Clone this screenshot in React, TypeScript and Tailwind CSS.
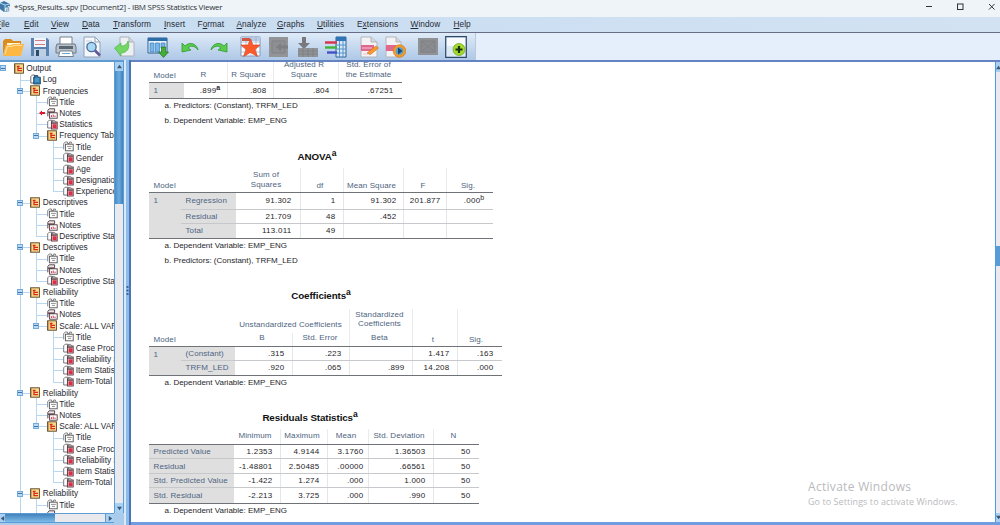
import type { ReactNode } from "react";
import clsx from "clsx";

const menus = [
  { text: "File", key: 0, box: "w-[28px]" },
  { text: "Edit", key: 0, box: "w-[27px]" },
  { text: "View", key: 0, box: "w-[31px]" },
  { text: "Data", key: 0, box: "w-[31px]" },
  { text: "Transform", key: 0, box: "w-[51px]" },
  { text: "Insert", key: 0, box: "w-[33.5px]" },
  { text: "Format", key: 1, box: "w-[39px]" },
  { text: "Analyze", key: 0, box: "w-[40.5px]" },
  { text: "Graphs", key: 0, box: "w-[40px]" },
  { text: "Utilities", key: 0, box: "w-[40px]" },
  { text: "Extensions", key: 1, box: "w-[53.5px]" },
  { text: "Window", key: 0, box: "w-[43px]" },
  { text: "Help", key: 0, box: "w-[30px]" },
];

type Kind = "book" | "log" | "title" | "notes" | "table";

// [level, icon, label]
const tree: [number, Kind, string][] = [
  [0, "book", "Output"],
  [1, "log", "Log"],
  [1, "book", "Frequencies"],
  [2, "title", "Title"],
  [2, "notes", "Notes"],
  [2, "table", "Statistics"],
  [2, "book", "Frequency Table"],
  [3, "title", "Title"],
  [3, "table", "Gender"],
  [3, "table", "Age"],
  [3, "table", "Designation"],
  [3, "table", "Experience"],
  [1, "book", "Descriptives"],
  [2, "title", "Title"],
  [2, "notes", "Notes"],
  [2, "table", "Descriptive Statistics"],
  [1, "book", "Descriptives"],
  [2, "title", "Title"],
  [2, "notes", "Notes"],
  [2, "table", "Descriptive Statistics"],
  [1, "book", "Reliability"],
  [2, "title", "Title"],
  [2, "notes", "Notes"],
  [2, "book", "Scale: ALL VARIABLES"],
  [3, "title", "Title"],
  [3, "table", "Case Processing"],
  [3, "table", "Reliability Statistics"],
  [3, "table", "Item Statistics"],
  [3, "table", "Item-Total Statistics"],
  [1, "book", "Reliability"],
  [2, "title", "Title"],
  [2, "notes", "Notes"],
  [2, "book", "Scale: ALL VARIABLES"],
  [3, "title", "Title"],
  [3, "table", "Case Processing"],
  [3, "table", "Reliability Statistics"],
  [3, "table", "Item Statistics"],
  [3, "table", "Item-Total Statistics"],
  [1, "book", "Reliability"],
  [2, "title", "Title"],
  [2, "notes", "Notes"],
];

// does the vertical guide of this level carry on below the row?
function continues(index: number, level: number) {
  for (let i = index + 1; i < tree.length; i++) {
    if (tree[i][0] === level) return true;
    if (tree[i][0] < level) return false;
  }
  return level <= 2;
}

function TreeIcon({ kind }: { kind: Kind }) {
  if (kind === "book") {
    return (
      <svg className="h-[11px] w-[10px] shrink-0" viewBox="0 0 10 11">
        <rect x="0.6" y="0.8" width="8.8" height="9.4" fill="#f8dc8c" stroke="#57401f" strokeWidth="0.9" />
        <path d="M1.6 1.2v8.6" stroke="#a27a3c" strokeWidth="0.6" />
        <path d="M2.800 3.400h2.800M4 3.200v4.400h4M4.400 5.400h3.600" stroke="#d62a1c" strokeWidth="1.3" fill="none" />
      </svg>
    );
  }
  if (kind === "log") {
    return (
      <svg className="h-[11px] w-[11px] shrink-0" viewBox="0 0 11 11">
        <path d="M0.8 9V2.6L2.4 1h2.2v8z" fill="#fff" stroke="#444" strokeWidth="0.8" />
        <path d="M3.6 10V3.2h1.2V1.6h3v1.6h2.6V10z" fill="#2f7fae" stroke="#17405f" strokeWidth="0.8" />
        <path d="M5 5h4M5 7h4" stroke="#7cc4e6" strokeWidth="0.7" />
      </svg>
    );
  }
  if (kind === "title") {
    return (
      <svg className="h-[11px] w-[11px] shrink-0" viewBox="0 0 11 11">
        <path d="M0.7 8.4V2.8L2.2 1h2.4v1.6h2V1h1.8v1.6" fill="#fff" stroke="#666" strokeWidth="0.8" />
        <rect x="2.4" y="3.2" width="7.8" height="6.6" fill="#fff" stroke="#555" strokeWidth="0.9" />
        <path d="M4 5.4h4.8M5 7.4h3" stroke="#777" strokeWidth="0.8" />
      </svg>
    );
  }
  if (kind === "notes") {
    return (
      <svg className="h-[11px] w-[11px] shrink-0" viewBox="0 0 11 11">
        <path d="M0.8 8.4V2.4L2.2 0.8h5.4v3" fill="#efe6e8" stroke="#4a3a40" strokeWidth="0.9" />
        <path d="M1.2 4.2h6.400" stroke="#5a3a44" strokeWidth="1.600" />
        <rect x="2.6" y="4.800" width="7.6" height="5.400" fill="#fff" stroke="#4d3b42" strokeWidth="0.9" />
        <path d="M4.4 9V7.2M6.2 9V6.6M8 9V7.6" stroke="#c8324c" strokeWidth="1" />
      </svg>
    );
  }
  return (
    <svg className="h-[11px] w-[11px] shrink-0" viewBox="0 0 11 11">
      <path d="M0.7 9V2.8L2.2 1.2h2.6V9z" fill="#fff" stroke="#555" strokeWidth="0.8" />
      <path d="M5 3V1.4h2.6l1 1.2" fill="none" stroke="#666" strokeWidth="0.8" />
      <rect x="4.4" y="3" width="5.8" height="7" fill="#fff" stroke="#4f3038" strokeWidth="0.9" />
      <path d="M4.8 4.200h5" stroke="#5c3c44" strokeWidth="1.200" />
      <path d="M5.400 5.200h4.300v4.200H5.400z" fill="#d9304a" />
    </svg>
  );
}

function TreeRow({ index }: { index: number }) {
  const [level, kind, label] = tree[index];
  const current = index === 4;
  return (
    <div className="flex h-[11.2px] items-center whitespace-nowrap">
      {Array.from({ length: level + 1 }, (_, l) => {
        const own = l === level;
        const down = l > 0 && continues(index, l);
        return (
          <div key={l} className="relative flex h-full w-[16.5px] shrink-0 items-center justify-center">
            {l > 0 && (own || down) && (
              <span className={clsx("absolute left-[8px] top-0 w-px bg-[#b9d7f1]", down ? "h-full" : "h-1/2")} />
            )}
            {own && l > 0 && <span className="absolute left-[8px] right-[-2px] top-1/2 h-px bg-[#b9d7f1]" />}
            {own && kind === "book" && (
              <span className="relative flex h-[6px] w-[6px] items-center justify-center border border-[#74a9d8] bg-[#b8dcf7]">
                <span className="h-px w-[4px] bg-[#3f74aa]" />
              </span>
            )}
            {own && current && (
              <svg className="absolute left-[11px] h-[6px] w-[6px]" viewBox="0 0 6 6">
                <path d="M0 3L3 0.4V2h3v2H3v1.6z" fill="#e0182a" />
              </svg>
            )}
          </div>
        );
      })}
      <span className="ml-[2px] flex w-[12.8px] shrink-0">
        <TreeIcon kind={kind} />
      </span>
      <span className="text-[8.300px] leading-none tracking-[-0.020px] text-[#2b2b33]">{label}</span>
    </div>
  );
}

function Tool({ className, children }: { className?: string; children: ReactNode }) {
  return (
    <svg className={clsx("h-[22px] w-[22px] shrink-0", className)} viewBox="0 0 22 22" fill="none">
      {children}
    </svg>
  );
}

function Toolbar() {
  return (
    <div className="flex h-[27px] w-[475.5px] items-center border-r border-[#b9c9db] bg-linear-to-b from-[#dfebf8] to-[#aec8e6] pl-[2px]">
      <Tool>
        <path d="M1 19V5l2-2h6l2 2h8v4H4z" fill="#d98d1e" />
        <path d="M5 7h13v5H5z" fill="#fff4d6" />
        <path d="M1 20L4 9h5l2-1h11l-3 12z" fill="#fdb844" />
        <path d="M3 18L5.500 10.400H10l2-1h8" stroke="#ffe0a0" />
      </Tool>
      <Tool className="ml-[5px]">
        <path d="M2 2h16l2 2v16H2z" fill="#5c82b0" />
        <path d="M5 2h12v9H5z" fill="#f2f5fa" />
        <path d="M6 4.500h10M6 8.500h10" stroke="#d4798a" />
        <path d="M5 13h12v7H5z" fill="#bcd0e2" />
        <path d="M7 14h3v6H7z" fill="#2e4a6c" />
      </Tool>
      <Tool className="ml-[4px]">
        <path d="M5 9V1h12v8z" fill="#fff" stroke="#77818d" />
        <path d="M2 8h18l1 3v6H1v-6z" fill="#b9c1ca" stroke="#6f7a87" />
        <path d="M4 10h14v3H4z" fill="#5b6673" />
        <path d="M5 15h12l1.500 5.500H3.500z" fill="#fff" stroke="#77818d" />
        <path d="M7 17.500h8" stroke="#64a5d8" />
      </Tool>
      <Tool className="ml-[4px]">
        <path d="M3 1h11l5 5v15H3z" fill="#f4f7fb" stroke="#93a2b4" />
        <path d="M14 1v5h5" stroke="#93a2b4" />
        <path d="M5 5h6M5 8h4" stroke="#c3cfdc" />
        <circle cx="10.500" cy="11" r="4.600" fill="#a9d8f5" stroke="#4a6e9a" strokeWidth="1.400" />
        <path d="M14 14.500l5 5" stroke="#62569b" strokeWidth="2.600" />
      </Tool>
      <Tool className="ml-[11px]">
        <path d="M6 1h9l5 5v14H6z" fill="#edf0f3" stroke="#a9b2bb" />
        <path d="M15 1v5h5" fill="#cfd6dc" stroke="#a9b2bb" />
        <path d="M0.500 12L7 7v3c4 0 6-1.500 7-5 2.500 7-1 12-7 12v3z" fill="#74d664" stroke="#4fb34c" strokeWidth="0.700" />
      </Tool>
      <Tool className="ml-[11px]">
        <path d="M1 2h19v15H1z" fill="#e9f3fc" stroke="#2c5d91" />
        <path d="M1 2h19v3H1z" fill="#2c6da8" />
        <path d="M3 7h4v9H3zM8.500 7h4v9h-4zM14 7h4v5h-4z" fill="#77b6e8" stroke="#3e7fba" strokeWidth="0.700" />
        <path d="M14.500 11h4v5h3L16.500 21.500 11.500 16h3z" fill="#43ad35" stroke="#237322" strokeWidth="0.700" />
      </Tool>
      <Tool className="ml-[11px]">
        <path d="M2 7v9l9-2-3-2c3-3 7-2 10 2-1-6-8-9-13-4z" fill="#5bcb4a" stroke="#2f9a35" strokeWidth="0.800" />
      </Tool>
      <Tool className="ml-[5px]">
        <path d="M20 7v9l-9-2 3-2c-3-3-7-2-10 2 1-6 8-9 13-4z" fill="#5bcb4a" stroke="#2f9a35" strokeWidth="0.800" />
      </Tool>
      <Tool className="ml-[11px]">
        <path d="M1 1h19v19H1z" fill="#fff" stroke="#8497b5" />
        <path d="M1 1h19v4H1z" fill="#b9cbe5" />
        <path d="M6 1v19M11 1v19M16 1v19M1 6h19M1 11h19M1 16h19" stroke="#9aadca" strokeWidth="0.700" />
        <path d="M2 2h8v3H2z" fill="#d25846" />
        <path d="M10.500 3l2.500 6h7l-5 4.500 2.500 7-7-4-7 4L6 13.500 1 9h7z" fill="#fb5b2c" stroke="#d83c18" strokeWidth="0.600" />
      </Tool>
      <Tool className="ml-[6px]">
        <path d="M1 1h19v20H1z" fill="#929497" />
        <path d="M4 5h13v12H4z" fill="#8d8f93" stroke="#7f8185" />
        <path d="M8 11l5-4v2.500h7v3h-7V15z" fill="#7d7f83" />
      </Tool>
      <Tool className="ml-[7px]">
        <path d="M5 1h4v6h4L7 13 1 7h4z" fill="#77797d" />
        <path d="M1 12h20v9H1z" fill="#919396" />
        <path d="M1 15h20M1 18h20M6 12v9M11 12v9M16 12v9" stroke="#7b7d81" strokeWidth="0.800" />
      </Tool>
      <Tool className="ml-[6px]">
        <path d="M11 1h10v20H11z" fill="#d6e8f8" stroke="#2f6498" />
        <path d="M11 1h10v4H11z" fill="#2f74b4" />
        <path d="M11 9h10M11 13h10M11 17h10M14.500 5v16M18 5v16" stroke="#4c8cc6" strokeWidth="0.900" />
        <path d="M0 6.500h12" stroke="#d8304e" strokeWidth="2.400" />
        <path d="M0 11.500h12" stroke="#3eb53a" strokeWidth="2.400" />
        <path d="M2 16.500h10" stroke="#4450c4" strokeWidth="2.400" />
      </Tool>
      <Tool className="ml-[11px]">
        <path d="M3 1h10l6 5v15H3z" fill="#f3f3f5" stroke="#b2b5bb" />
        <path d="M13 1v5h6" fill="#d4d6da" stroke="#b2b5bb" />
        <path d="M3 9h13v6H3z" fill="#e0688c" />
        <path d="M4 12h10M5 18h8" stroke="#f6c4d2" />
        <path d="M9 17l9-7 2.500 2-8 6.500z" fill="#f79a2b" stroke="#c96d15" strokeWidth="0.600" />
      </Tool>
      <Tool className="ml-[4px]">
        <path d="M2 1h10l5 5v15H2z" fill="#f3f3f5" stroke="#b2b5bb" />
        <path d="M12 1v5h5" fill="#d4d6da" stroke="#b2b5bb" />
        <path d="M2 9h10v6H2z" fill="#e0688c" />
        <circle cx="15.500" cy="15" r="6.300" fill="#f39a2d" stroke="#c87716" strokeWidth="0.600" />
        <circle cx="15.500" cy="15" r="3.800" fill="#5aa0c8" />
        <path d="M14 11.500l4.500 3.500-4.500 3.500z" fill="#174a77" />
      </Tool>
      <Tool className="ml-[11px]">
        <path d="M1 2h20v17H1z" fill="#8f9194" />
        <path d="M4 5h14v11H4z" fill="#898b8f" stroke="#7e8084" />
        <path d="M4 5l14 11M18 5L4 16" stroke="#7e8084" strokeWidth="0.700" />
      </Tool>
      <Tool className="ml-[6px]">
        <path d="M0.700 0.700h20.600v20.600H0.700z" fill="#dceaf8" stroke="#2f4766" strokeWidth="1.200" />
        <path d="M2 2h18v8H2z" fill="#f7fbff" />
        <circle cx="14" cy="13.500" r="6" fill="#a4d92e" stroke="#72a81d" strokeWidth="0.800" />
        <path d="M14 10v7M10.500 13.500h7" stroke="#17300f" strokeWidth="2.200" />
      </Tool>
    </div>
  );
}

// a body cell: number on the right
function Num({ children, className }: { children?: ReactNode; className?: string }) {
  return (
    <div className={clsx("flex items-center justify-end border-r border-[#e4e6ea] tracking-[0.250px] text-[#26262a]", className)}>
      {children}
    </div>
  );
}

function Head({ children, className }: { children?: ReactNode; className?: string }) {
  return (
    <div className={clsx("flex items-end justify-center border-r border-[#e9ebee] pb-[2px] text-center text-[#4d6480]", className)}>
      <span className="relative right-[1.500px]">{children}</span>
    </div>
  );
}

function Side({ children, className }: { children?: ReactNode; className?: string }) {
  return <div className={clsx("flex items-center bg-[#dfdfe0] pl-[5px] text-[#4d6480]", className)}>{children}</div>;
}

function Caption({ children, className }: { children: ReactNode; className?: string }) {
  return (
    <h2 className={clsx("flex justify-center text-[9.800px] font-bold leading-[12px] tracking-[-0.100px] text-[#111]", className)}>
      {children}
      <span className="-mt-[3px] text-[8.500px] leading-[10px]">a</span>
    </h2>
  );
}

function Note({ children }: { children: ReactNode }) {
  return <p className="h-[14.5px] pl-[16px] leading-[14.5px] tracking-normal text-[#26262a]">{children}</p>;
}

const anova = [
  ["Regression", "91.302", "1", "91.302", "201.877", ".000"],
  ["Residual", "21.709", "48", ".452", "", ""],
  ["Total", "113.011", "49", "", "", ""],
];

const coefficients = [
  ["(Constant)", ".315", ".223", "", "1.417", ".163"],
  ["TRFM_LED", ".920", ".065", ".899", "14.208", ".000"],
];

const residuals = [
  ["Predicted Value", "1.2353", "4.9144", "3.1760", "1.36503", "50"],
  ["Residual", "-1.48801", "2.50485", ".00000", ".66561", "50"],
  ["Std. Predicted Value", "-1.422", "1.274", ".000", "1.000", "50"],
  ["Std. Residual", "-2.213", "3.725", ".000", ".990", "50"],
];

function ModelSummary() {
  return (
    <section className="w-[253px]">
      <div className="-mt-[3px] grid h-[24px] grid-cols-[35px_44px_46px_65px_63px] border-b border-[#6f7276] leading-[9.500px]">
        <Head className="justify-start border-r-0 pb-[0px] pl-[6.500px]">Model</Head>
        <Head className="pb-[3px]">R</Head>
        <Head className="pb-[3px]">R Square</Head>
        <Head className="pb-[3px]">Adjusted R Square</Head>
        <Head className="border-r-0 px-[8px] pb-[3px]">Std. Error of the Estimate</Head>
      </div>
      <div className="grid h-[16px] grid-cols-[35px_44px_46px_65px_63px] border-b border-[#6f7276]">
        <Side>1</Side>
        <Num className="pr-[6px]">
          .899<span className="-mt-[5px] text-[7px] font-bold">a</span>
        </Num>
        <Num className="pr-[6px]">.808</Num>
        <Num className="pr-[8px]">.804</Num>
        <Num className="border-r-0 pr-[8px]">.67251</Num>
      </div>
      <Note>a. Predictors: (Constant), TRFM_LED</Note>
      <Note>b. Dependent Variable: EMP_ENG</Note>
    </section>
  );
}

function Anova() {
  return (
    <section className="mt-[23px] w-[344px]">
      <Caption className="pr-[7px]">ANOVA</Caption>
      <div className="mt-[5px] grid h-[25px] grid-cols-[87px_65px_43px_60px_43px_46px] border-b border-[#6f7276] leading-[9.500px]">
        <Head className="justify-start border-r-0 pb-[1px] pl-[6.500px]">Model</Head>
        <Head className="px-[14px] pb-[3px]">Sum of Squares</Head>
        <Head>df</Head>
        <Head>Mean Square</Head>
        <Head>F</Head>
        <Head className="border-r-0">Sig.</Head>
      </div>
      <div className="flex border-b border-[#6f7276]">
        <Side className="w-[32px] items-start pt-[2px]">1</Side>
        <div className="w-[312px]">
          {anova.map((row, i) => (
            <div
              key={row[0]}
              className={clsx(
                "grid grid-cols-[55px_65px_43px_60px_43px_46px]",
                i === 0 ? "h-[17px]" : "h-[14px]",
                i < 2 && "border-b border-[#c6c8cc]",
              )}
            >
              <Side>{row[0]}</Side>
              <Num className="pr-[8px]">{row[1]}</Num>
              <Num className="pr-[7px]">{row[2]}</Num>
              <Num className="pr-[6px]">{row[3]}</Num>
              <Num className="pr-[5px]">{row[4]}</Num>
              <Num className="border-r-0 pr-[8px]">
                {row[5]}
                {i === 0 && <span className="-mt-[6px] text-[7px]">b</span>}
              </Num>
            </div>
          ))}
        </div>
      </div>
      <Note>a. Dependent Variable: EMP_ENG</Note>
      <Note>b. Predictors: (Constant), TRFM_LED</Note>
    </section>
  );
}

function Coefficients() {
  return (
    <section className="mt-[22px] w-[353px]">
      <Caption className="pr-[8px]">Coefficients</Caption>
      <div className="mt-[7px] grid h-[38px] grid-cols-[86px_115px_63px_45px_44px] border-b border-[#6f7276] leading-[9.500px]">
        <Head className="justify-start border-r-0 pb-[1px] pl-[6.500px]">Model</Head>
        <div className="flex flex-col justify-end border-r border-[#e9ebee] pr-[2px] text-center text-[#4d6480]">
          <div className="h-[13.500px]">Unstandardized Coefficients</div>
          <div className="grid h-[13px] grid-cols-[58px_55px]">
            <span className="border-r border-[#e9ebee] pr-[2px]">B</span>
            <span>Std. Error</span>
          </div>
        </div>
        <div className="flex flex-col justify-end border-r border-[#e9ebee] pr-[2px] text-center text-[#4d6480]">
          <div className="h-[23.500px]">Standardized Coefficients</div>
          <div className="h-[13px]">Beta</div>
        </div>
        <Head>t</Head>
        <Head className="border-r-0 pr-[4px]">Sig.</Head>
      </div>
      <div className="flex border-b border-[#6f7276]">
        <Side className="w-[32px] items-start pt-[2px]">1</Side>
        <div className="w-[321px]">
          {coefficients.map((row, i) => (
            <div
              key={row[0]}
              className={clsx(
                "grid grid-cols-[54px_58px_57px_63px_45px_44px]",
                i === 0 ? "h-[14px] border-b border-[#c6c8cc]" : "h-[13.500px]",
              )}
            >
              <Side>{row[0]}</Side>
              <Num className="pr-[7px]">{row[1]}</Num>
              <Num className="pr-[7px]">{row[2]}</Num>
              <Num className="pr-[7px]">{row[3]}</Num>
              <Num className="pr-[7px]">{row[4]}</Num>
              <Num className="border-r-0 pr-[8px]">{row[5]}</Num>
            </div>
          ))}
        </div>
      </div>
      <Note>a. Dependent Variable: EMP_ENG</Note>
    </section>
  );
}

function Residuals() {
  return (
    <section className="mt-[21.500px] w-[330px]">
      <Caption className="pr-[7px]">Residuals Statistics</Caption>
      <div className="mt-[5px] grid h-[16px] grid-cols-[85px_47px_47px_41px_65px_45px] border-b border-[#6f7276] leading-[9.500px]">
        <Head className="border-r-0" />
        <Head className="pb-[3px]">Minimum</Head>
        <Head className="pb-[3px]">Maximum</Head>
        <Head className="pb-[3px]">Mean</Head>
        <Head className="pb-[3px]">Std. Deviation</Head>
        <Head className="border-r-0 pr-[2px] pb-[3px]">N</Head>
      </div>
      <div className="border-b border-[#6f7276]">
        {residuals.map((row, i) => (
          <div
            key={row[0]}
            className={clsx(
              "grid h-[14.500px] grid-cols-[85px_47px_47px_41px_65px_45px]",
              i < 3 && "border-b border-[#c6c8cc]",
            )}
          >
            <Side className="pt-[1.500px]">{row[0]}</Side>
            <Num className="pt-[1.500px] pr-[7px]">{row[1]}</Num>
            <Num className="pt-[1.500px] pr-[7px]">{row[2]}</Num>
            <Num className="pt-[1.500px] pr-[4px]">{row[3]}</Num>
            <Num className="pt-[1.500px] pr-[7px]">{row[4]}</Num>
            <Num className="border-r-0 pt-[1.500px] pr-[8px]">{row[5]}</Num>
          </div>
        ))}
      </div>
      <Note>a. Dependent Variable: EMP_ENG</Note>
    </section>
  );
}

function Arrow({ d }: { d: string }) {
  return (
    <svg className="h-[5px] w-[5px] shrink-0" viewBox="0 0 6 6">
      <path d={d} fill="#3d5674" />
    </svg>
  );
}

function Outline() {
  return (
    <aside className="flex h-[461px] w-[124px] shrink-0 flex-col bg-[#a9cbec]">
      <div className="flex h-[451px] shrink-0">
        <div className="w-[114px] overflow-hidden bg-white">
          <div className="-ml-[5px] pt-[0.800px]">
            {tree.map((_, i) => (
              <TreeRow key={i} index={i} />
            ))}
          </div>
        </div>
        <div className="flex w-[10px] flex-col items-center border-x border-[#5c9bd3] bg-[#e9e9ee]">
          <div className="flex h-[9px] w-full items-center justify-center bg-[#a7d0f3]">
            <Arrow d="M0 5L3 1l3 4z" />
          </div>
          <div className="h-[133px] w-full bg-linear-to-r from-[#4b8cc6] via-[#6cabe0] to-[#3d7fbd]" />
          <div className="mt-auto flex h-[10px] w-full items-center justify-center bg-[#a7d0f3]">
            <Arrow d="M0 1l3 4 3-4z" />
          </div>
        </div>
      </div>
      <div className="flex h-[10px] w-[114px] items-center border-y border-[#5c9bd3] bg-[#e9e9ee]">
        <div className="flex h-full w-[5px] items-center bg-[#a7d0f3]">
          <Arrow d="M5 0L1 3l4 3z" />
        </div>
        <div className="h-full w-[50px] bg-linear-to-b from-[#3f83bd] to-[#7fbbe8]" />
        <div className="ml-auto flex h-full w-[9px] items-center justify-center border-l border-[#5c9bd3] bg-[#a7d0f3]">
          <Arrow d="M1 0l4 3-4 3z" />
        </div>
      </div>
    </aside>
  );
}

export default function App() {
  return (
    <div className="flex h-[525px] w-[1000px] flex-col overflow-hidden bg-[#e4effb] font-['Liberation_Sans',Arial,sans-serif]">
      <header className="flex h-[17px] shrink-0 items-start bg-[#eff4f8]">
        <svg className="mt-[1px] h-[11px] w-[11px]" viewBox="0 0 11 11">
          <path d="M0 2l4-2 6 3v7l-6 1-4-3z" fill="#3f78a8" />
          <path d="M0 2l5 2 5-1M5 4v7" stroke="#b8dcf2" strokeWidth="0.900" fill="none" />
          <path d="M5.500 10V7h1.500v3M8 10V5.500h1.500V10" stroke="#fff" strokeWidth="0.800" fill="none" />
        </svg>
        <h1 className="ml-[3px] whitespace-nowrap font-['Open_Sans',sans-serif] text-[8px] leading-[14px] tracking-[-0.250px] text-[#2e3338]">
          *Spss_Results..spv [Document2] - IBM SPSS Statistics Viewer
        </h1>
        <svg className="ml-auto h-[13px] w-[76px]" viewBox="0 0 76 13" fill="none" stroke="#2d3338" strokeWidth="1">
          <path d="M2 6.500h6M65 4l5.500 5.500M70.500 4L65 9.500" />
          <rect x="33.500" y="4" width="5.500" height="5.500" />
        </svg>
      </header>
      <nav className="flex h-[16px] shrink-0 items-center border-b border-[#686d86] bg-linear-to-r from-[#c7dcf0] to-[#d2e2f3] text-[8.300px] leading-none tracking-[0.050px] text-[#262a35]">
        <div className="-ml-[4px] flex">
          {menus.map(({ text, key, box }) => (
            <span key={text} className={clsx("shrink-0", box)}>
              {text.slice(0, key)}
              <u className="underline-offset-1">{text[key]}</u>
              {text.slice(key + 1)}
            </span>
          ))}
        </div>
      </nav>
      <Toolbar />
      <div className="flex h-[465px] shrink-0">
        <div className="w-[124px] border-t-2 border-[#5f9ad0] bg-[#a9cbec]">
          <Outline />
        </div>
        <div className="flex w-[7px] items-center justify-center border-x-2 border-l-[#d9e9f8] border-r-[#4a74b4] bg-[#8dbcea]">
          <svg className="mb-[4px] h-[10px] w-[3px] shrink-0" viewBox="0 0 3 10">
            <path d="M0.500 1h2M0.500 4.500h2M0.500 8h2" stroke="#2c4f80" strokeWidth="1.500" />
          </svg>
        </div>
        <main className="flex min-w-0 flex-1 flex-col border-t-2 border-b-3 border-t-[#6383c3] border-b-[#6f9de0]">
          <div className="flex min-h-0 flex-1">
            <div className="relative flex-1 overflow-hidden bg-white pl-[17.500px] text-[8px] leading-[12px] tracking-[0.100px]">
              <ModelSummary />
              <Anova />
              <Coefficients />
              <Residuals />
              {/* activation watermark floats over the page */}
              <div className="absolute bottom-[13px] left-[677px] whitespace-nowrap font-['Open_Sans',sans-serif] tracking-normal text-[#b9babd]">
                <p className="text-[12px] leading-[17px] tracking-[0.300px]">Activate Windows</p>
                <p className="text-[9px] leading-[14px] tracking-[0.060px]">Go to Settings to activate Windows.</p>
              </div>
            </div>
            <div className="flex w-[5px] flex-col border-l border-[#4f9de0] bg-[#eceaf0]">
              <div className="flex h-[10px] items-center bg-[#a7d0f3]">
                <Arrow d="M0 5L3 1l3 4z" />
              </div>
              <div className="mt-[174px] h-[20px] bg-[#5a9bd6]" />
              <div className="mt-auto flex h-[9px] items-center bg-[#a7d0f3]">
                <Arrow d="M0 1l3 4 3-4z" />
              </div>
            </div>
          </div>
        </main>
      </div>
    </div>
  );
}
